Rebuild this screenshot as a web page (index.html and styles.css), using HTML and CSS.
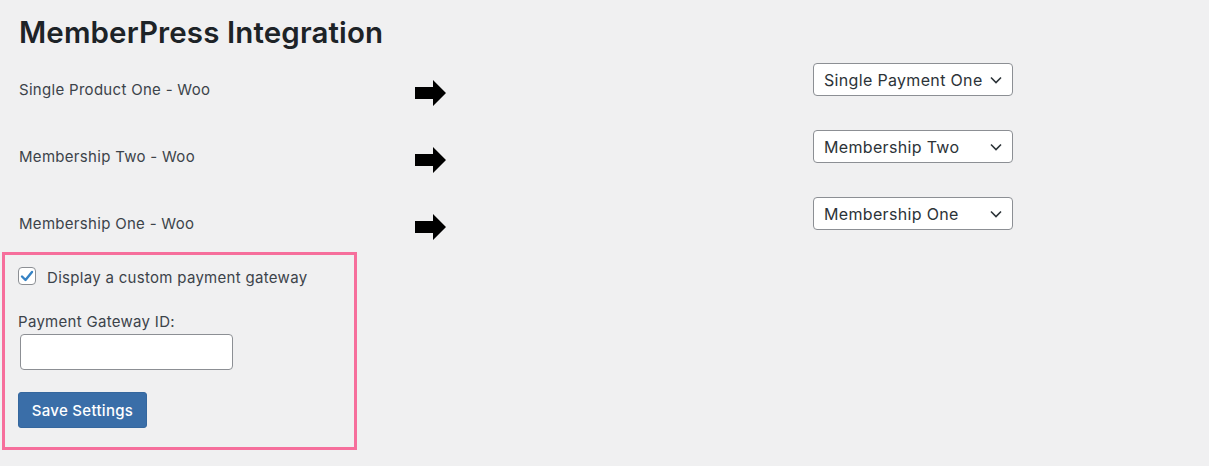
FILE: index.html
```html
<!DOCTYPE html>
<html lang="en">
<head>
<meta charset="utf-8">
<title>MemberPress Integration</title>
<link rel="stylesheet" href="styles.css">
</head>
<body>
<div class="wrap">
  <h1 class="title">MemberPress Integration</h1>
  <div class="rows">
    <div class="row">
      <div class="label">Single Product One - Woo</div>
      <div class="arrow"><svg width="31" height="26" viewBox="0 0 31 26"><polygon points="0,7 18,7 18,0 31,13 18,26 18,19 0,19" fill="#000"/></svg></div>
      <div class="select"><span>Single Payment One</span><svg class="chev" width="12" height="8" viewBox="0 0 12 8"><polyline points="1,1.5 6,6.5 11,1.5" fill="none" stroke="#2c3338" stroke-width="1.6"/></svg></div>
    </div>
    <div class="row">
      <div class="label">Membership Two - Woo</div>
      <div class="arrow"><svg width="31" height="26" viewBox="0 0 31 26"><polygon points="0,7 18,7 18,0 31,13 18,26 18,19 0,19" fill="#000"/></svg></div>
      <div class="select"><span>Membership Two</span><svg class="chev" width="12" height="8" viewBox="0 0 12 8"><polyline points="1,1.5 6,6.5 11,1.5" fill="none" stroke="#2c3338" stroke-width="1.6"/></svg></div>
    </div>
    <div class="row">
      <div class="label">Membership One - Woo</div>
      <div class="arrow"><svg width="31" height="26" viewBox="0 0 31 26"><polygon points="0,7 18,7 18,0 31,13 18,26 18,19 0,19" fill="#000"/></svg></div>
      <div class="select"><span>Membership One</span><svg class="chev" width="12" height="8" viewBox="0 0 12 8"><polyline points="1,1.5 6,6.5 11,1.5" fill="none" stroke="#2c3338" stroke-width="1.6"/></svg></div>
    </div>
  </div>
  <div class="highlight">
    <label class="check-line">
      <span class="checkbox"><svg width="14" height="12" viewBox="0 0 14 12"><polyline points="2,6.5 5.5,10 12,2" fill="none" stroke="#3582c4" stroke-width="2.4" stroke-linecap="round" stroke-linejoin="round"/></svg></span>
      <span class="check-text">Display a custom payment gateway</span>
    </label>
    <div class="field-label">Payment Gateway ID:</div>
    <div class="input"></div>
    <button class="btn">Save Settings</button>
  </div>
</div>
</body>
</html>
```
FILE: styles.css
```css
html, body {
  margin: 0;
  padding: 0;
  background: #f0f0f1;
}
body {
  font-family: Inter, "Noto Sans", sans-serif;
  color: #3c434a;
}
.wrap {
  padding: 14px 0 0 0;
}
.title {
  margin: 0 0 0 19px;
  font-size: 29.5px;
  font-weight: 600;
  line-height: 36px;
  color: #1d2327;
  letter-spacing: 0.12px;
}
.rows {
  margin-top: 14px;
  padding-left: 19px;
}
.row {
  display: grid;
  grid-template-columns: 396px 398px 200px;
  height: 67px;
}
.label {
  font-size: 15px;
  line-height: 20px;
  padding-top: 16px;
  letter-spacing: 0.3px;
}
.arrow {
  padding-top: 16px;
}
.arrow svg {
  display: block;
}
.select {
  box-sizing: border-box;
  height: 33px;
  width: 200px;
  margin-top: -1px;
  border: 1px solid #8c8f94;
  border-radius: 4px;
  background: #fff;
  display: flex;
  align-items: center;
  justify-content: space-between;
  padding: 0 10px 0 10px;
  font-size: 16px;
  letter-spacing: 0.33px;
  color: #2c3338;
}
.chev {
  display: block;
}
.highlight {
  box-sizing: border-box;
  width: 355px;
  height: 198px;
  margin: -13px 0 0 2px;
  border: 3px solid #f66f9c;
  padding: 11px 0 0 13px;
}
.check-line {
  display: flex;
  align-items: center;
  gap: 11px;
  font-size: 15px;
  line-height: 20px;
  letter-spacing: 0.3px;
}
.check-text {
  position: relative;
  top: 2px;
}
.checkbox {
  box-sizing: border-box;
  width: 18px;
  height: 18px;
  border: 1px solid #8c8f94;
  border-radius: 4px;
  background: #fff;
  display: flex;
  align-items: center;
  justify-content: center;
}
.checkbox svg {
  display: block;
}
.field-label {
  margin-top: 26px;
  font-size: 15px;
  line-height: 20px;
  letter-spacing: 0.3px;
}
.input {
  box-sizing: border-box;
  width: 213px;
  height: 36px;
  margin: 2px 0 0 2px;
  border: 1px solid #8c8f94;
  border-radius: 4px;
  background: #fff;
}
.btn {
  display: block;
  margin-top: 22px;
  box-sizing: border-box;
  width: 129px;
  height: 36px;
  border: 1px solid #35679e;
  border-radius: 3px;
  background: #3a6ea8;
  color: #fff;
  font-family: Inter, "Noto Sans", sans-serif;
  font-size: 15px;
  font-weight: 500;
  letter-spacing: 0.3px;
  padding: 0;
}
```
